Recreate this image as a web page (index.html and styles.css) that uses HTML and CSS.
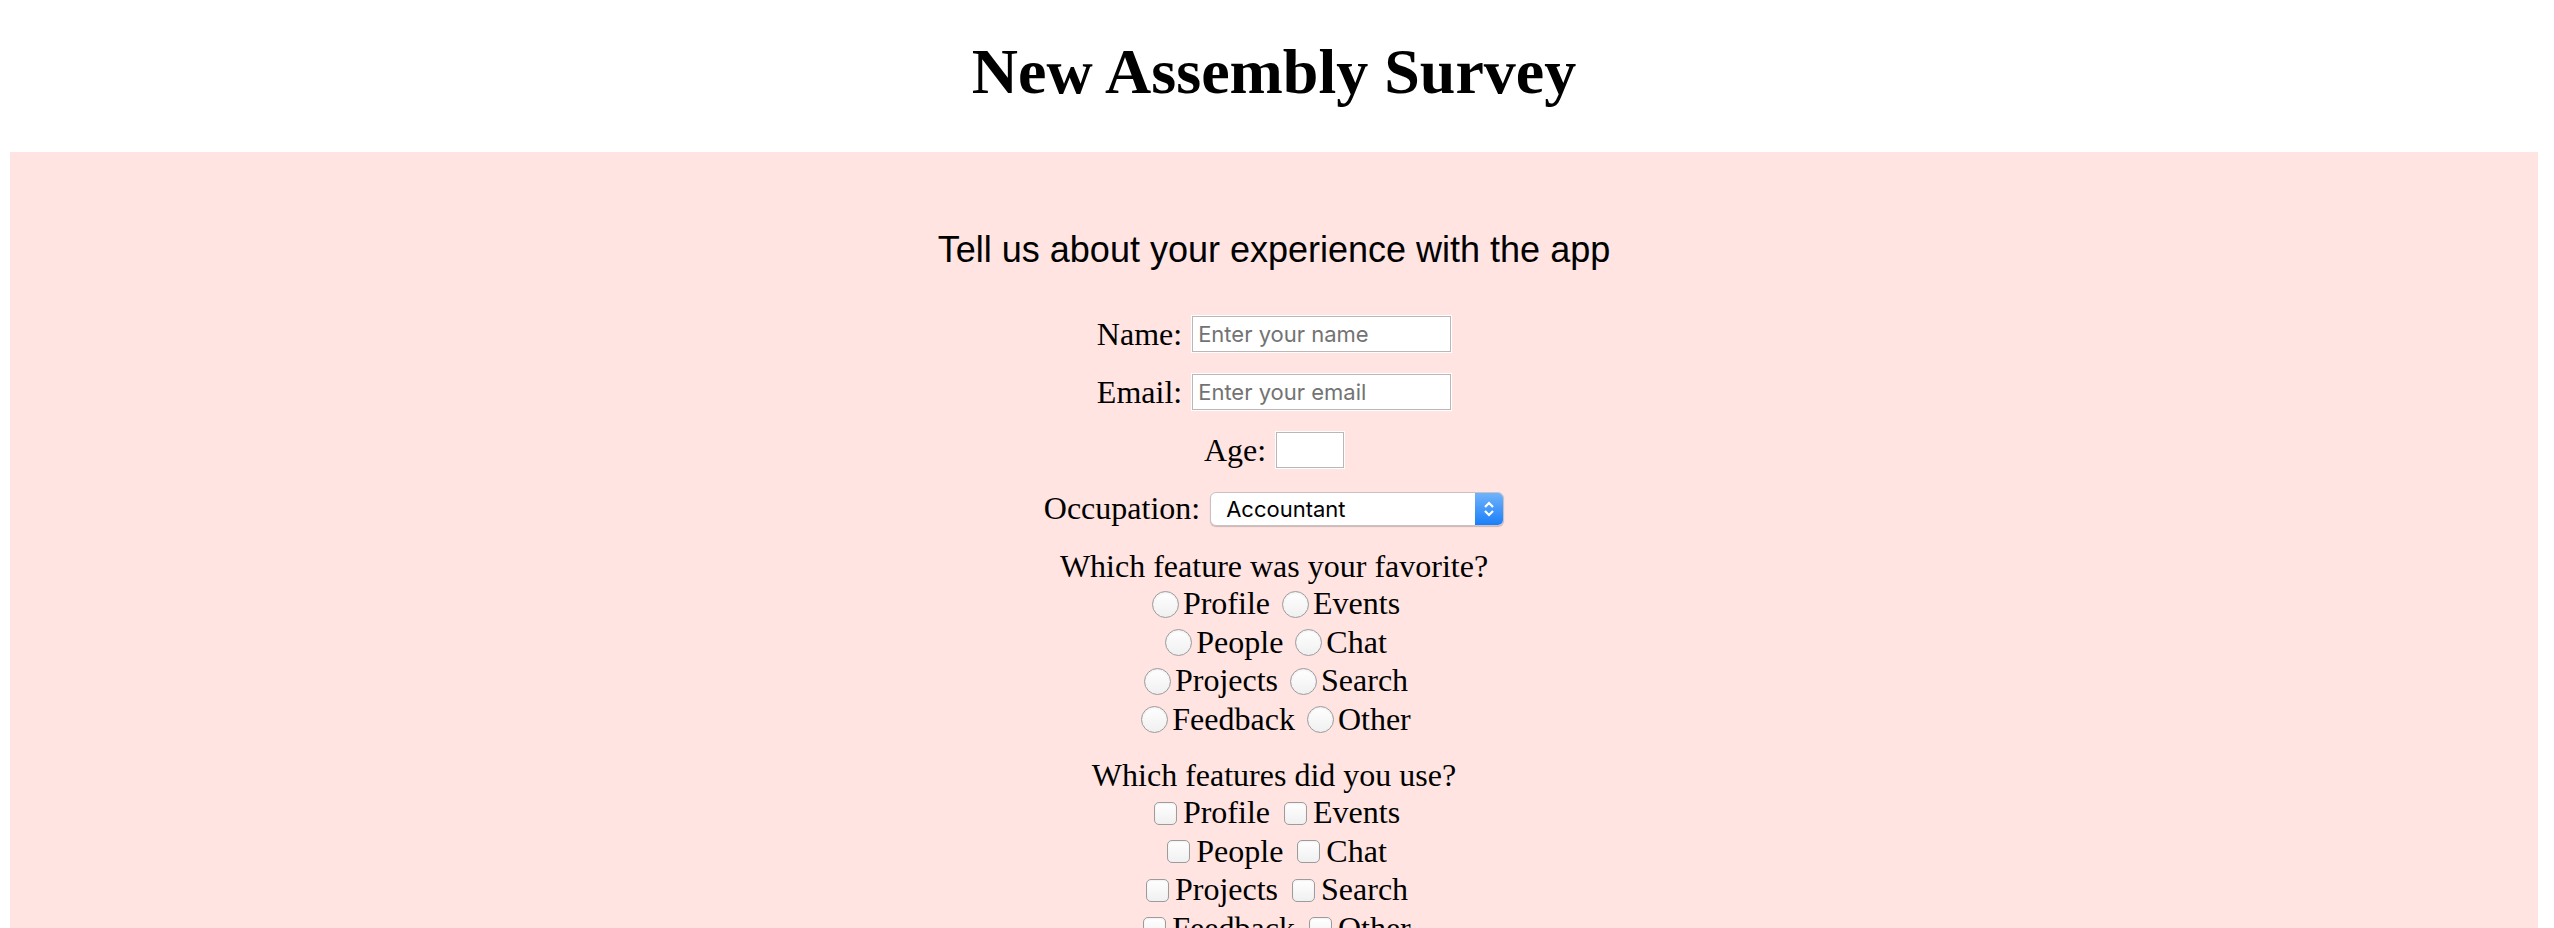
FILE: index.html
```html
<!DOCTYPE html>
<html lang="en">
<head>
<meta charset="utf-8">
<title>New Assembly Survey</title>
<link rel="stylesheet" href="styles.css">
</head>
<body>
<h1 class="title">New Assembly Survey</h1>
<form class="survey">
  <p class="description">Tell us about your experience with the app</p>
  <div class="row">
    <label class="label" for="name">Name:</label>
    <input class="text-input" id="name" type="text" placeholder="Enter your name">
  </div>
  <div class="row">
    <label class="label" for="email">Email:</label>
    <input class="text-input" id="email" type="email" placeholder="Enter your email">
  </div>
  <div class="row">
    <label class="label" for="age">Age:</label>
    <input class="text-input age" id="age" type="number">
  </div>
  <div class="row">
    <label class="label" for="occ">Occupation:</label>
    <div class="select-wrap">
      <select class="select" id="occ">
        <option>Accountant</option>
        <option>Developer</option>
        <option>Designer</option>
        <option>Student</option>
        <option>Other</option>
      </select>
      <div class="select-arrow">
        <svg width="12" height="18" viewBox="0 0 12 18"><path d="M2 7 L6 3 L10 7" fill="none" stroke="#fff" stroke-width="2.2"/><path d="M2 11 L6 15 L10 11" fill="none" stroke="#fff" stroke-width="2.2"/></svg>
      </div>
    </div>
  </div>

  <div class="question">Which feature was your favorite?</div>
  <div class="options">
    <div class="opt-row"><label><input class="radio" type="radio" name="fav">Profile</label> <label><input class="radio" type="radio" name="fav">Events</label></div>
    <div class="opt-row"><label><input class="radio" type="radio" name="fav">People</label> <label><input class="radio" type="radio" name="fav">Chat</label></div>
    <div class="opt-row"><label><input class="radio" type="radio" name="fav">Projects</label> <label><input class="radio" type="radio" name="fav">Search</label></div>
    <div class="opt-row"><label><input class="radio" type="radio" name="fav">Feedback</label> <label><input class="radio" type="radio" name="fav">Other</label></div>
  </div>

  <div class="question q2">Which features did you use?</div>
  <div class="options">
    <div class="opt-row"><label><input class="check" type="checkbox">Profile</label> <label><input class="check" type="checkbox">Events</label></div>
    <div class="opt-row"><label><input class="check" type="checkbox">People</label> <label><input class="check" type="checkbox">Chat</label></div>
    <div class="opt-row"><label><input class="check" type="checkbox">Projects</label> <label><input class="check" type="checkbox">Search</label></div>
    <div class="opt-row"><label><input class="check" type="checkbox">Feedback</label> <label><input class="check" type="checkbox">Other</label></div>
  </div>
</form>
</body>
</html>
```
FILE: styles.css
```css
html, body {
  margin: 0;
  padding: 0;
  background: #ffffff;
}
body {
  margin: 0 16px 0 10px;
  font-family: "Liberation Serif", "Times New Roman", serif;
  color: #000;
}
.title {
  margin: 36px 0 45px;
  font-size: 64px;
  font-weight: bold;
  text-align: center;
  line-height: 71px;
}
.survey {
  background: #ffe4e1;
  padding: 77px 0 40px;
  text-align: center;
  min-height: 800px;
}
.description {
  margin: 0 0 46px;
  font-family: "Liberation Sans", Arial, sans-serif;
  font-size: 36px;
  line-height: 41px;
}
.row {
  display: flex;
  justify-content: center;
  align-items: center;
  gap: 10px;
  height: 36px;
  margin-bottom: 22px;
}
.label {
  font-size: 32px;
  line-height: 36px;
}
.text-input {
  box-sizing: border-box;
  width: 259px;
  height: 36px;
  border: 1px solid #b8b8b8;
  outline: 1px solid #ffffff;
  background: #fff;
  padding: 0 5px;
  margin: 0;
  font-family: Inter, "Liberation Sans", sans-serif;
  font-size: 22px;
  color: #000;
}
.text-input::placeholder {
  color: #737373;
}
.text-input.age {
  width: 68px;
  -moz-appearance: textfield;
}
.text-input.age::-webkit-outer-spin-button,
.text-input.age::-webkit-inner-spin-button {
  -webkit-appearance: none;
  margin: 0;
}
.select-wrap {
  display: flex;
  box-sizing: border-box;
  width: 294px;
  height: 34px;
  margin-top: 2px;
  border: 1px solid #c9c2c2;
  border-radius: 6px;
  overflow: hidden;
  background: #fff;
  box-shadow: 0 1px 1px rgba(0,0,0,0.2);
}
.select {
  flex: 1;
  -webkit-appearance: none;
  appearance: none;
  border: none;
  outline: none;
  background: transparent;
  padding: 0 0 0 15px;
  margin: 0;
  font-family: Inter, "Liberation Sans", sans-serif;
  font-size: 22px;
  color: #000;
}
.select-arrow {
  width: 28px;
  display: flex;
  align-items: center;
  justify-content: center;
  background: linear-gradient(#70b3fb, #1b7ff9);
}
.question {
  font-size: 32px;
  line-height: 36px;
  margin-top: 20px;
}
.question.q2 {
  margin-top: 19px;
}
.opt-row {
  font-size: 32px;
  line-height: 38.5px;
  height: 38.5px;
  white-space: nowrap;
}
.opt-row label {
  display: inline-flex;
  align-items: center;
  vertical-align: top;
  height: 38.5px;
}
.radio {
  -webkit-appearance: none;
  appearance: none;
  box-sizing: border-box;
  width: 27px;
  height: 27px;
  margin: 2px 4px 0 4px;
  border: 1.5px solid #9c9c9c;
  border-radius: 50%;
  background: linear-gradient(#ffffff, #f0f0f0);
  box-shadow: inset 0 1px 2px rgba(0,0,0,0.08);
}
.check {
  -webkit-appearance: none;
  appearance: none;
  box-sizing: border-box;
  width: 23px;
  height: 23px;
  margin: 2px 6px 0 6px;
  border: 1.5px solid #9c9c9c;
  border-radius: 5px;
  background: linear-gradient(#ffffff, #f0f0f0);
  box-shadow: inset 0 1px 2px rgba(0,0,0,0.06);
}
```
